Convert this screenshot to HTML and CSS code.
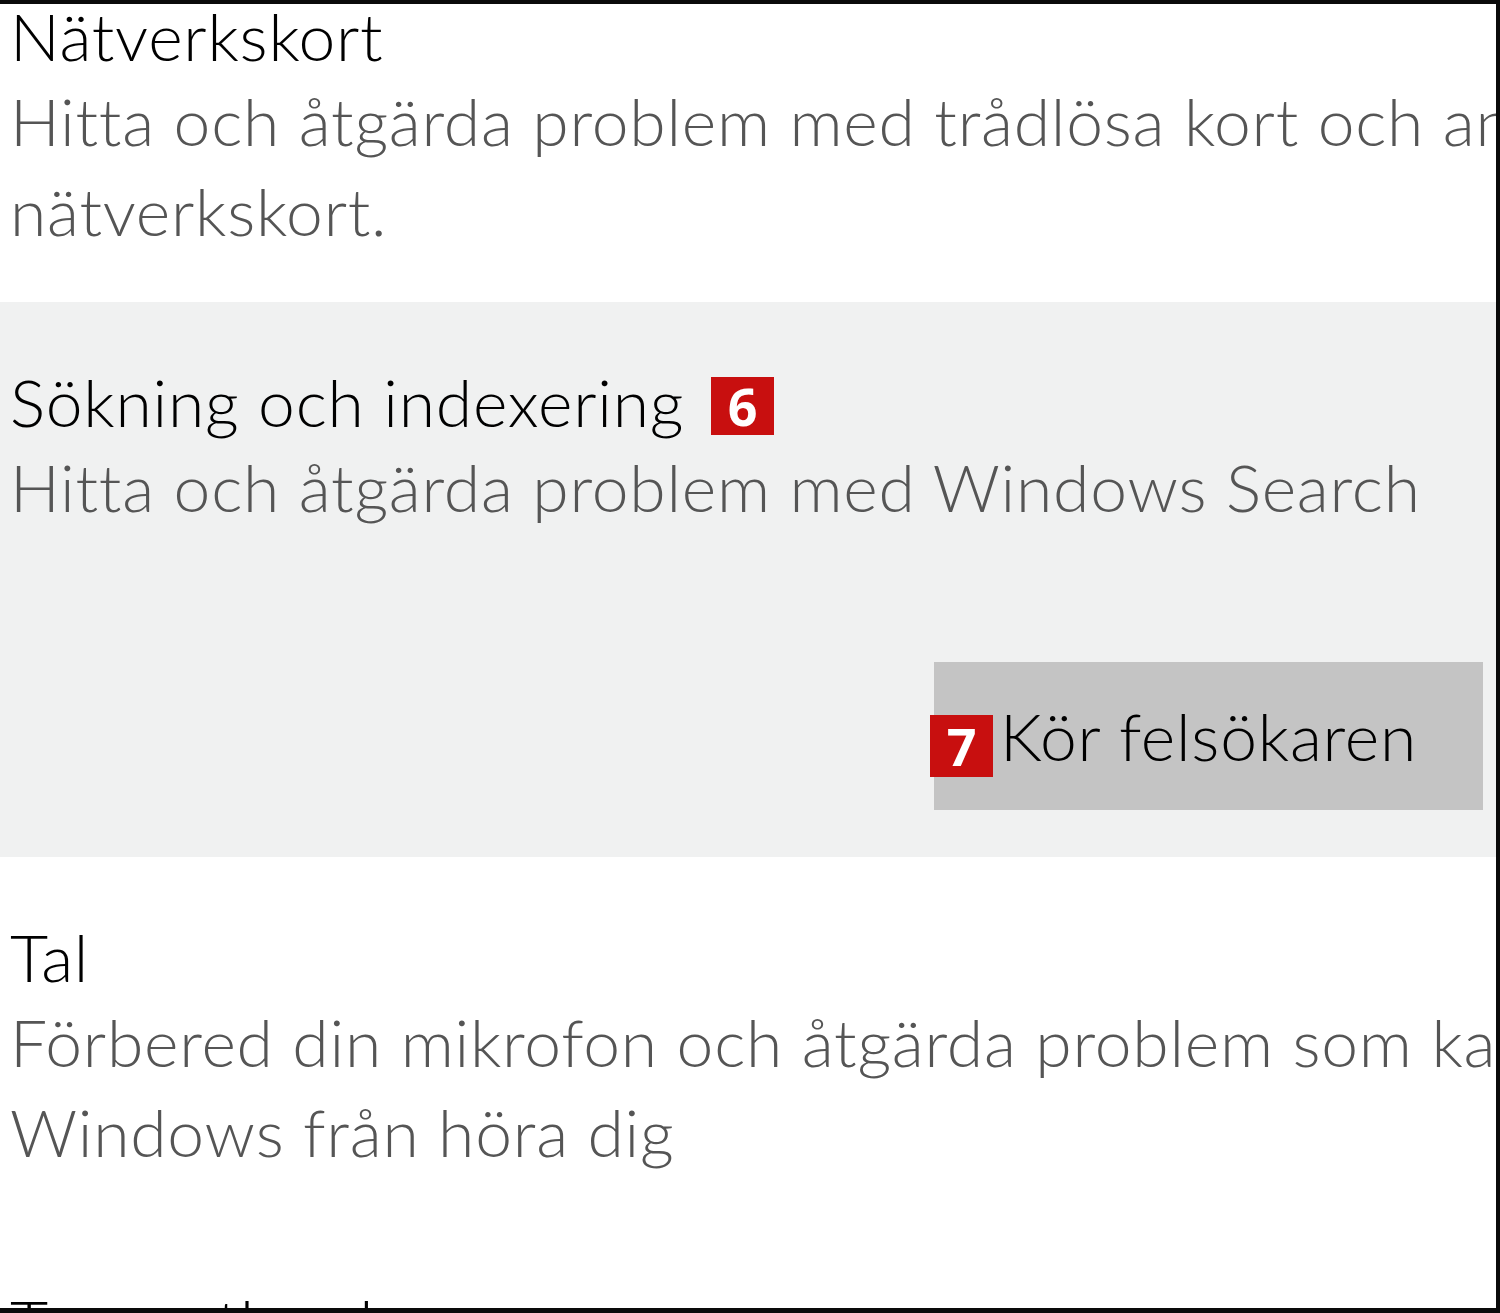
FILE: index.html
```html
<!DOCTYPE html>
<html lang="sv">
<head>
<meta charset="utf-8">
<title>Felsök</title>
<link rel="stylesheet" href="styles.css">
</head>
<body>
<div class="frame">
  <div class="list">
    <section class="item">
      <div class="title">Nätverkskort</div>
      <div class="desc"><span class="line">Hitta och åtgärda problem med trådlösa kort och andra</span><span class="line">nätverkskort.</span></div>
    </section>
    <section class="item selected">
      <div class="title">Sökning och indexering <span class="badge badge-inline">6</span></div>
      <div class="desc"><span class="line">Hitta och åtgärda problem med Windows Search</span></div>
      <div class="actions">
        <div class="button"><span class="badge badge-over">7</span>Kör felsökaren</div>
      </div>
    </section>
    <section class="item">
      <div class="title">Tal</div>
      <div class="desc"><span class="line">Förbered din mikrofon och åtgärda problem som kan hindra</span><span class="line">Windows från höra dig</span></div>
    </section>
    <section class="item">
      <div class="title">Tangentbord</div>
    </section>
  </div>
</div>
</body>
</html>
```
FILE: styles.css
```css
html, body {
  margin: 0;
  padding: 0;
  background: #ffffff;
}
.frame {
  width: 1500px;
  height: 1313px;
  box-sizing: border-box;
  border-top: 4px solid #0a0a0a;
  border-right: 4px solid #0a0a0a;
  border-bottom: 5px solid #0a0a0a;
  overflow: hidden;
  background: #ffffff;
  font-family: "Lato", "Open Sans", sans-serif;
  font-weight: 300;
  font-size: 66px;
  letter-spacing: 0.75px;
}
.list {
  margin-top: -68px;
  display: flex;
  flex-direction: column;
}
.item {
  padding: 60px 0 46px 10px;
}
.item.selected {
  background: #f0f1f1;
  padding-bottom: 47px;
}
.title {
  display: flex;
  align-items: flex-start;
  line-height: 80px;
  color: #000000;
  white-space: nowrap;
}
.desc {
  display: flex;
  flex-direction: column;
  line-height: 90px;
  color: #555555;
}
.line {
  white-space: nowrap;
}
.badge {
  display: flex;
  align-items: center;
  justify-content: center;
  background: #c80f0f;
  color: #ffffff;
  font-family: "Open Sans", "Liberation Sans", sans-serif;
  font-weight: 700;
  font-size: 52px;
  letter-spacing: 0;
  line-height: 1;
}
.badge-inline {
  width: 63px;
  height: 58px;
  margin-left: 27px;
  margin-top: 15px;
}
.actions {
  display: flex;
  justify-content: flex-end;
  margin-top: 130px;
  padding-right: 13px;
}
.button {
  position: relative;
  width: 549px;
  height: 148px;
  background: #c4c4c4;
  color: #000000;
  display: flex;
  align-items: center;
  justify-content: center;
  line-height: 1;
  white-space: nowrap;
}
.badge-over {
  position: absolute;
  left: -4px;
  top: 53px;
  width: 63px;
  height: 62px;
}
```
